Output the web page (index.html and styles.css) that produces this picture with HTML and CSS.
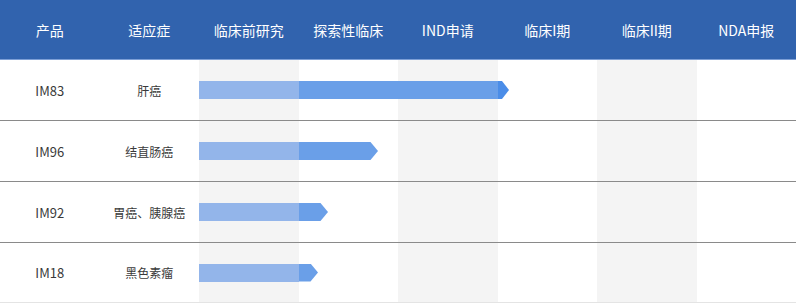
FILE: index.html
```html
<!DOCTYPE html>
<html lang="zh-CN">
<head>
<meta charset="utf-8">
<title>研发管线</title>
<link rel="stylesheet" href="styles.css">
</head>
<body>
<div class="pipeline">
  <div class="head">
    <div class="hcell">产品</div>
    <div class="hcell">适应症</div>
    <div class="hcell">临床前研究</div>
    <div class="hcell">探索性临床</div>
    <div class="hcell">IND申请</div>
    <div class="hcell">临床I期</div>
    <div class="hcell">临床II期</div>
    <div class="hcell">NDA申报</div>
  </div>

  <div class="row">
    <div class="cell code">IM83</div>
    <div class="cell ind">肝癌</div>
    <div class="stage s3 gray"></div><div class="stage s4"></div><div class="stage s5 gray"></div><div class="stage s6"></div><div class="stage s7 gray"></div><div class="stage s8"></div>
    <div class="bar" style="width:310px"><span class="seg light"></span><span class="seg dark"></span><span class="tip"></span></div>
  </div>

  <div class="row">
    <div class="cell code">IM96</div>
    <div class="cell ind">结直肠癌</div>
    <div class="stage s3 gray"></div><div class="stage s4"></div><div class="stage s5 gray"></div><div class="stage s6"></div><div class="stage s7 gray"></div><div class="stage s8"></div>
    <div class="bar" style="width:179px"><span class="seg light"></span><span class="seg dark point"></span></div>
  </div>

  <div class="row">
    <div class="cell code">IM92</div>
    <div class="cell ind">胃癌、胰腺癌</div>
    <div class="stage s3 gray"></div><div class="stage s4"></div><div class="stage s5 gray"></div><div class="stage s6"></div><div class="stage s7 gray"></div><div class="stage s8"></div>
    <div class="bar" style="width:129px"><span class="seg light"></span><span class="seg dark point"></span></div>
  </div>

  <div class="row last">
    <div class="cell code">IM18</div>
    <div class="cell ind">黑色素瘤</div>
    <div class="stage s3 gray"></div><div class="stage s4"></div><div class="stage s5 gray"></div><div class="stage s6"></div><div class="stage s7 gray"></div><div class="stage s8"></div>
    <div class="bar" style="width:119px"><span class="seg light"></span><span class="seg dark point"></span></div>
  </div>
</div>
</body>
</html>
```

FILE: styles.css
```css
html, body {
  margin: 0;
  padding: 0;
  background: #ffffff;
}

body {
  font-family: "Microsoft YaHei", "Noto Sans CJK SC", "Noto Sans", sans-serif;
  width: 796px;
  overflow: hidden;
}

.pipeline {
  width: 796px;
}

.head {
  display: grid;
  grid-template-columns: repeat(8, 1fr);
  height: 59px;
  background: #3163ae;
  border-bottom: 1px solid #7d9fd6;
}

.hcell {
  display: flex;
  align-items: center;
  justify-content: center;
  color: #ffffff;
  font-size: 14px;
  padding-top: 1px;
}

.row {
  display: grid;
  grid-template-columns: repeat(8, 1fr);
  grid-template-rows: 60px;
  border-bottom: 1px solid #8a8a8a;
}

.row.last {
  grid-template-rows: 59px;
  border-bottom-color: #e4e4e4;
}

.cell {
  grid-row: 1;
  display: flex;
  align-items: center;
  justify-content: center;
  color: #3a3a3a;
}

.code {
  grid-column: 1;
  font-size: 13px;
}

.ind {
  grid-column: 2;
  font-size: 12px;
}

.stage { grid-row: 1; }
.s3 { grid-column: 3; }
.s4 { grid-column: 4; }
.s5 { grid-column: 5; }
.s6 { grid-column: 6; }
.s7 { grid-column: 7; }
.s8 { grid-column: 8; }

.gray {
  background: #f4f4f4;
}

.bar {
  grid-row: 1;
  grid-column: 3 / 9;
  align-self: center;
  height: 18px;
  display: flex;
  position: relative;
}

.seg {
  display: block;
  height: 100%;
}

.light {
  flex: 0 0 99.5px;
  background: #93b5ea;
}

.dark {
  flex: 1 1 auto;
  background: #6a9fe8;
}

.point {
  clip-path: polygon(0 0, calc(100% - 7.5px) 0, 100% 50%, calc(100% - 7.5px) 100%, 0 100%);
}

.tip {
  flex: 0 0 11px;
  height: 100%;
  background: #4b8de8;
  clip-path: polygon(0 0, 4px 0, 100% 50%, 4px 100%, 0 100%);
}
```
